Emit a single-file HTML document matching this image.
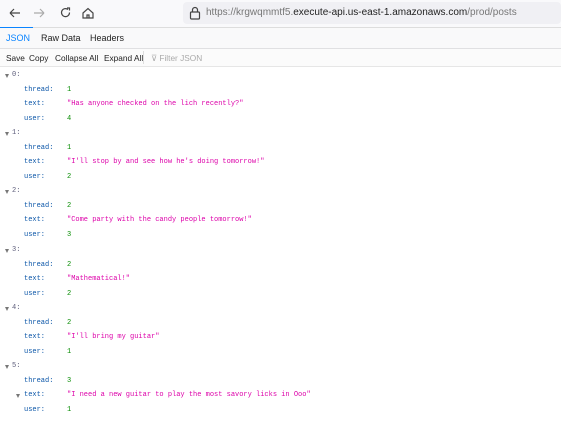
<!DOCTYPE html>
<html><head><style>
body{margin:0;width:561px;height:430px;background:#fff;position:relative;overflow:hidden;font-family:"Liberation Sans",sans-serif}
.a{position:absolute;white-space:nowrap}
.m{font-family:"Liberation Mono",monospace;font-size:7px;line-height:10px}
.k{color:#0b56a8}.n{color:#058b00}.s{color:#dd00a9}.i{color:#5c5c7a}
.tw{position:absolute;width:0;height:0;border-left:2.5px solid transparent;border-right:2.5px solid transparent;border-top:4px solid #777}
.b{position:absolute;top:53px;font-size:8.3px;color:#222;white-space:nowrap}
</style></head><body>
<div class="a" style="left:0;top:0;width:561px;height:27px;background:#f9f9fb"></div>
<svg class="a" style="left:8px;top:6px" width="90" height="14" viewBox="0 0 90 14" fill="none" stroke="#444" stroke-width="1.2">
<path d="M2 7h10M2 7l4-4M2 7l4 4"/>
<path d="M26 7h10M36 7l-4-4M36 7l-4 4" stroke="#aaa"/>
<path d="M60 3.5a4 4 0 1 0 1.5 3"/><path d="M59 2h2.5v2.5"/>
<path d="M75 7l5-4.5 5 4.5v5h-10z"/><path d="M79 12v-3h2v3"/>
</svg>
<div class="a" style="left:183px;top:2px;width:378px;height:22px;background:#f0f0f4;border-radius:4px"></div>
<svg class="a" style="left:189px;top:6px" width="12" height="14" viewBox="0 0 12 14" fill="none" stroke="#444" stroke-width="1.2"><rect x="1.5" y="6" width="9" height="7" rx="1"/><path d="M3.5 6V4a2.5 2.5 0 0 1 5 0v2"/></svg>
<div class="a" style="left:206px;top:7px;font-size:10px;color:#777">https://krgwqmmtf5.<span style="color:#222">execute-api.us-east-1.amazonaws.com</span>/prod/posts</div>
<div class="a" style="left:0;top:27px;width:561px;height:1px;background:#ddd"></div>
<div class="a" style="left:0;top:27px;width:33px;height:2px;background:#0a84ff"></div>
<div class="a" style="left:0;top:28px;width:561px;height:20px;background:#f9f9fa"></div>
<div class="a" style="left:6px;top:33px;font-size:9px;color:#0a84ff">JSON</div>
<div class="a" style="left:41px;top:33px;font-size:9px;color:#222">Raw Data</div>
<div class="a" style="left:90px;top:33px;font-size:9px;color:#222">Headers</div>
<div class="a" style="left:0;top:48px;width:561px;height:1px;background:#e0e0e2"></div>
<div class="a" style="left:0;top:49px;width:561px;height:17px;background:#fbfbfb"></div>
<div class="b" style="left:6px">Save</div>
<div class="b" style="left:29px">Copy</div>
<div class="b" style="left:55px">Collapse All</div>
<div class="b" style="left:104px">Expand All</div>
<div class="a" style="left:143px;top:51px;width:1px;height:13px;background:#ddd"></div>
<div class="b" style="left:151px;color:#aaa">⊽ Filter JSON</div>
<div class="a" style="left:0;top:66px;width:561px;height:1px;background:#e6e6e6"></div>
<div id="c"></div>
<script>
var d=[[1,"Has anyone checked on the lich recently?",4],[1,"I'll stop by and see how he's doing tomorrow!",2],[2,"Come party with the candy people tomorrow!",3],[2,"Mathematical!",2],[2,"I'll bring my guitar",1],[3,"I need a new guitar to play the most savory licks in Ooo",1]];
var h="";
d.forEach(function(r,i){var y=70+i*58.2;
h+='<div class="tw" style="left:5px;top:'+(y+4)+'px"></div><div class="a m i" style="left:12px;top:'+y+'px">'+i+':</div>';
h+='<div class="a m k" style="left:24px;top:'+(y+15)+'px">thread:</div><div class="a m n" style="left:67px;top:'+(y+15)+'px">'+r[0]+'</div>';
if(i==5)h+='<div class="tw" style="left:16px;top:'+(y+33)+'px"></div>';
h+='<div class="a m k" style="left:24px;top:'+(y+29)+'px">text:</div><div class="a m s" style="left:67px;top:'+(y+29)+'px">"'+r[1]+'"</div>';
h+='<div class="a m k" style="left:24px;top:'+(y+44)+'px">user:</div><div class="a m n" style="left:67px;top:'+(y+44)+'px">'+r[2]+'</div>';});
document.getElementById("c").innerHTML=h;
</script>
</body></html>
